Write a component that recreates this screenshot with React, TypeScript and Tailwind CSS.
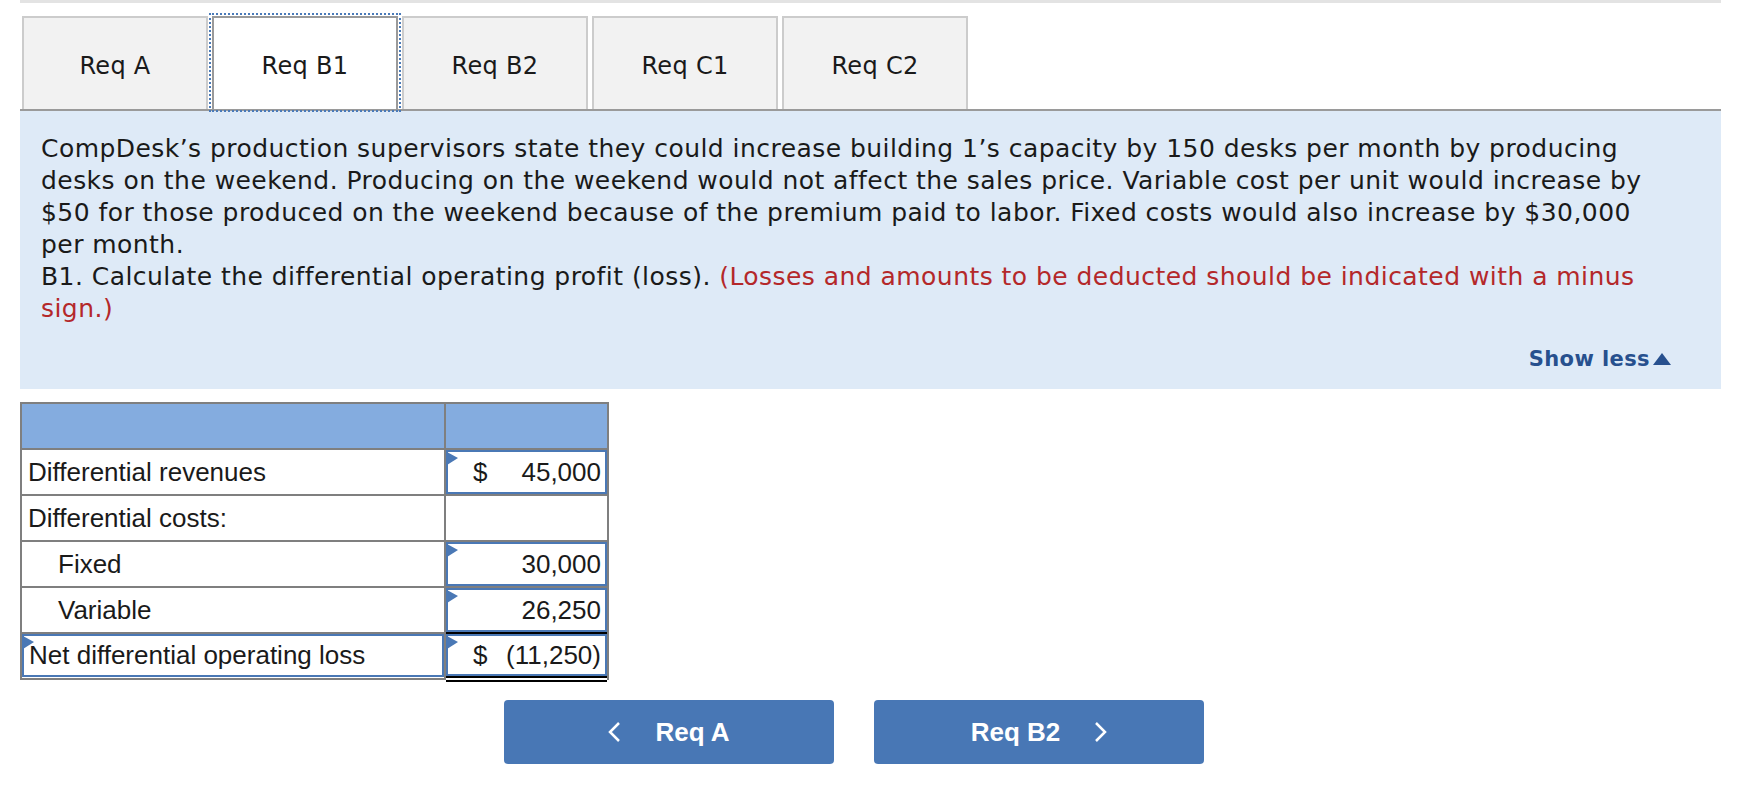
import React from "react";

const tabs = ["Req A", "Req B1", "Req B2", "Req C1", "Req C2"];

const Marker = ({ className = "" }: { className?: string }) => (
  <svg className={"absolute " + className} width="11" height="13" viewBox="0 0 11 13">
    <polygon points="0,0 11,6 0,13" fill="#4a78b5" />
  </svg>
);

const ValueBox = ({ dollar, value }: { dollar?: boolean; value: string }) => (
  <div className="relative h-full w-full border-2 border-[#4a78b5] flex items-center pl-[25px] pr-[4px]">
    <Marker className="left-[-1px] top-[0px]" />
    <span>{dollar ? "$" : ""}</span>
    <span className="ml-auto">{value}</span>
  </div>
);

const rows = [
  { label: "Differential revenues", indent: false, input: true, dollar: true, value: "45,000" },
  { label: "Differential costs:", indent: false, input: false, dollar: false, value: "" },
  { label: "Fixed", indent: true, input: true, dollar: false, value: "30,000" },
  { label: "Variable", indent: true, input: true, dollar: false, value: "26,250", total: true },
];

export default function App() {
  return (
    <div className="w-[1752px] h-[812px] bg-white text-[#1a1a1a]">
      <div className="ml-[20px] w-[1701px]">
        <div className="h-[3px] bg-[#e3e3e3]" />

        {/* tabs */}
        <div className="flex gap-[4px] pl-[2px] pt-[13px] border-b-2 border-[#9a9a9a] font-['DejaVu_Sans',Verdana,sans-serif] text-[24px] tracking-[0.3px]">
          {tabs.map((t, i) => (
            <div
              key={t}
              className={
                i === 1
                  ? "w-[186px] h-[93px] pt-[4px] flex items-center justify-center bg-white border-2 border-b-0 border-[#9a9a9a] outline-2 outline-dotted outline-[#4a7ab8] outline-offset-1"
                  : "w-[186px] h-[93px] pt-[4px] flex items-center justify-center bg-[#f2f2f2] border-2 border-b-0 border-[#cccccc]"
              }
            >
              {t}
            </div>
          ))}
        </div>

        {/* question panel */}
        <div className="h-[278px] bg-[#deeaf7] flex flex-col pt-[22px] pl-[21px] pr-[50px] pb-[18px] font-['DejaVu_Sans',Verdana,sans-serif] text-[25px] tracking-[0.45px] leading-[32px]">
          <div className="whitespace-nowrap">
            <div>CompDesk’s production supervisors state they could increase building 1’s capacity by 150 desks per month by producing</div>
            <div>desks on the weekend. Producing on the weekend would not affect the sales price. Variable cost per unit would increase by</div>
            <div>$50 for those produced on the weekend because of the premium paid to labor. Fixed costs would also increase by $30,000</div>
            <div>per month.</div>
            <div>
              B1. Calculate the differential operating profit (loss).{" "}
              <span className="text-[#b4282a]">(Losses and amounts to be deducted should be indicated with a minus</span>
            </div>
            <div className="text-[#b4282a]">sign.)</div>
          </div>
          <div className="mt-auto flex justify-end items-center leading-[24px] font-bold text-[21px] tracking-[0.4px] text-[#27508e]">
            Show less
            <svg width="18" height="12" viewBox="0 0 18 12" className="ml-[3px]">
              <polygon points="9,0 18,12 0,12" fill="#27508e" />
            </svg>
          </div>
        </div>

        {/* table */}
        <div className="mt-[13px] w-[589px] border-2 border-b-0 border-[#7f7f7f] font-['Liberation_Sans',Arial,sans-serif] text-[26px]">
          <div className="flex h-[46px] bg-[#84acdf] border-b-2 border-[#7f7f7f]">
            <div className="w-[424px] border-r-2 border-[#7f7f7f]" />
            <div className="flex-1" />
          </div>
          {rows.map((r) => (
            <div key={r.label} className="flex h-[46px]">
              <div
                className={
                  "w-[424px] border-r-2 border-b-2 border-[#7f7f7f] flex items-center " +
                  (r.indent ? "pl-[36px]" : "pl-[6px]")
                }
              >
                {r.label}
              </div>
              <div className={"flex-1 border-b-2 " + (r.total ? "border-black" : "border-[#7f7f7f]")}>
                {r.input ? <ValueBox dollar={r.dollar} value={r.value} /> : null}
              </div>
            </div>
          ))}
          <div className="flex h-[46px]">
            <div className="w-[424px] border-r-2 border-b-2 border-[#7f7f7f] pb-[1px]">
              <div className="relative h-full w-full border-2 border-[#4a78b5] flex items-center pl-[5px]">
                <Marker className="left-[-1px] top-[0px]" />
                Net differential operating loss
              </div>
            </div>
            <div className="flex-1 border-b-[6px] border-double border-black h-[48px]">
              <ValueBox dollar value="(11,250)" />
            </div>
          </div>
        </div>

        {/* nav buttons */}
        <div className="mt-[20px] flex gap-[40px] pl-[484px] font-['Liberation_Sans',Arial,sans-serif] font-bold text-[26px] text-white">
          <button className="w-[330px] h-[64px] rounded-[4px] bg-[#4877b5] flex items-center justify-center gap-[34px]">
            <svg width="13" height="20" viewBox="0 0 13 20">
              <polyline points="11,1 2,10 11,19" fill="none" stroke="white" strokeWidth="2.5" />
            </svg>
            <span>Req A</span>
          </button>
          <button className="w-[330px] h-[64px] rounded-[4px] bg-[#4877b5] flex items-center justify-center gap-[34px]">
            <span>Req B2</span>
            <svg width="13" height="20" viewBox="0 0 13 20">
              <polyline points="2,1 11,10 2,19" fill="none" stroke="white" strokeWidth="2.5" />
            </svg>
          </button>
        </div>
      </div>
    </div>
  );
}
